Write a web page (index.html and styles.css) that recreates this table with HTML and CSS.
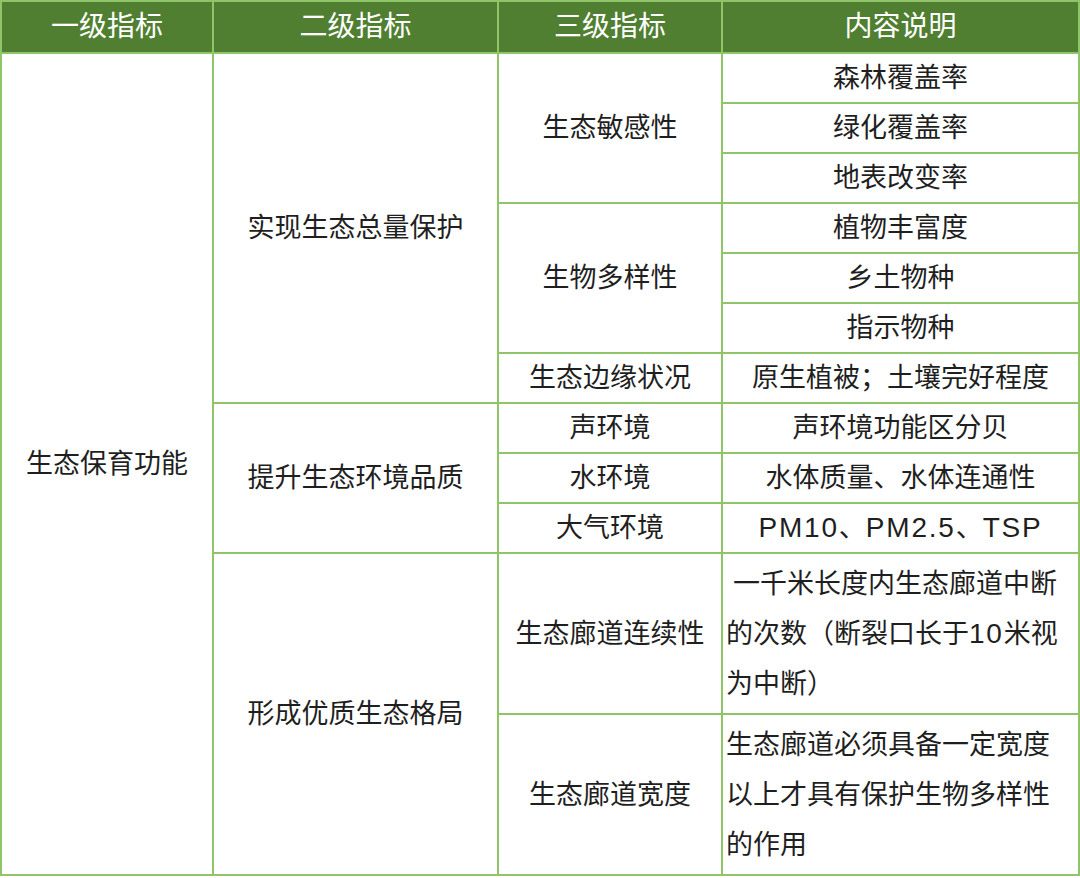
FILE: index.html
```html
<!DOCTYPE html>
<html lang="zh-CN">
<head>
<meta charset="utf-8">
<title>生态保育功能指标</title>
<link rel="stylesheet" href="styles.css">
</head>
<body>
<table class="grid">
  <colgroup>
    <col class="c1"><col class="c2"><col class="c3"><col class="c4">
  </colgroup>
  <thead>
    <tr class="head">
      <th>一级指标</th>
      <th>二级指标</th>
      <th>三级指标</th>
      <th>内容说明</th>
    </tr>
  </thead>
  <tbody>
    <tr>
      <td rowspan="12">生态保育功能</td>
      <td rowspan="7">实现生态总量保护</td>
      <td rowspan="3">生态敏感性</td>
      <td>森林覆盖率</td>
    </tr>
    <tr><td>绿化覆盖率</td></tr>
    <tr><td>地表改变率</td></tr>
    <tr>
      <td rowspan="3">生物多样性</td>
      <td>植物丰富度</td>
    </tr>
    <tr><td>乡土物种</td></tr>
    <tr><td>指示物种</td></tr>
    <tr>
      <td>生态边缘状况</td>
      <td>原生植被；土壤完好程度</td>
    </tr>
    <tr>
      <td rowspan="3">提升生态环境品质</td>
      <td>声环境</td>
      <td>声环境功能区分贝</td>
    </tr>
    <tr>
      <td>水环境</td>
      <td>水体质量、水体连通性</td>
    </tr>
    <tr>
      <td>大气环境</td>
      <td><span class="latin">PM10</span>、<span class="latin">PM2.5</span>、<span class="latin">TSP</span></td>
    </tr>
    <tr class="tall">
      <td rowspan="2">形成优质生态格局</td>
      <td>生态廊道连续性</td>
      <td class="para indent">一千米长度内生态廊道中断<br>的次数（断裂口长于<span class="latin">10</span>米视<br>为中断）</td>
    </tr>
    <tr class="tall">
      <td>生态廊道宽度</td>
      <td class="para">生态廊道必须具备一定宽度<br>以上才具有保护生物多样性<br>的作用</td>
    </tr>
  </tbody>
</table>
</body>
</html>
```
FILE: styles.css
```css
html, body {
  margin: 0;
  padding: 0;
  background: #ffffff;
}

.grid {
  border-collapse: collapse;
  table-layout: fixed;
  width: 1078px;
  font-family: "Liberation Sans", "Noto Sans CJK SC", sans-serif;
  font-size: 27px;
  color: #1f1f1f;
}

.c1 { width: 212px; }
.c2 { width: 285px; }
.c3 { width: 224px; }
.c4 { width: 357px; }

.grid th,
.grid td {
  border: 2px solid #8fc568;
  padding: 0;
  text-align: center;
  vertical-align: middle;
  line-height: 48px;
  height: 48px;
  white-space: nowrap;
}

.head th {
  background: #517f31;
  color: #ffffff;
  font-weight: normal;
  font-size: 28px;
  height: 50px;
  line-height: 46px;
}

.tall td {
  height: 159px;
}

.grid td.para {
  text-align: left;
  padding-left: 3px;
  line-height: 50px;
}

.grid td.indent {
  text-indent: 7px;
}

.latin {
  font-size: 28px;
  letter-spacing: 1.8px;
}
```
